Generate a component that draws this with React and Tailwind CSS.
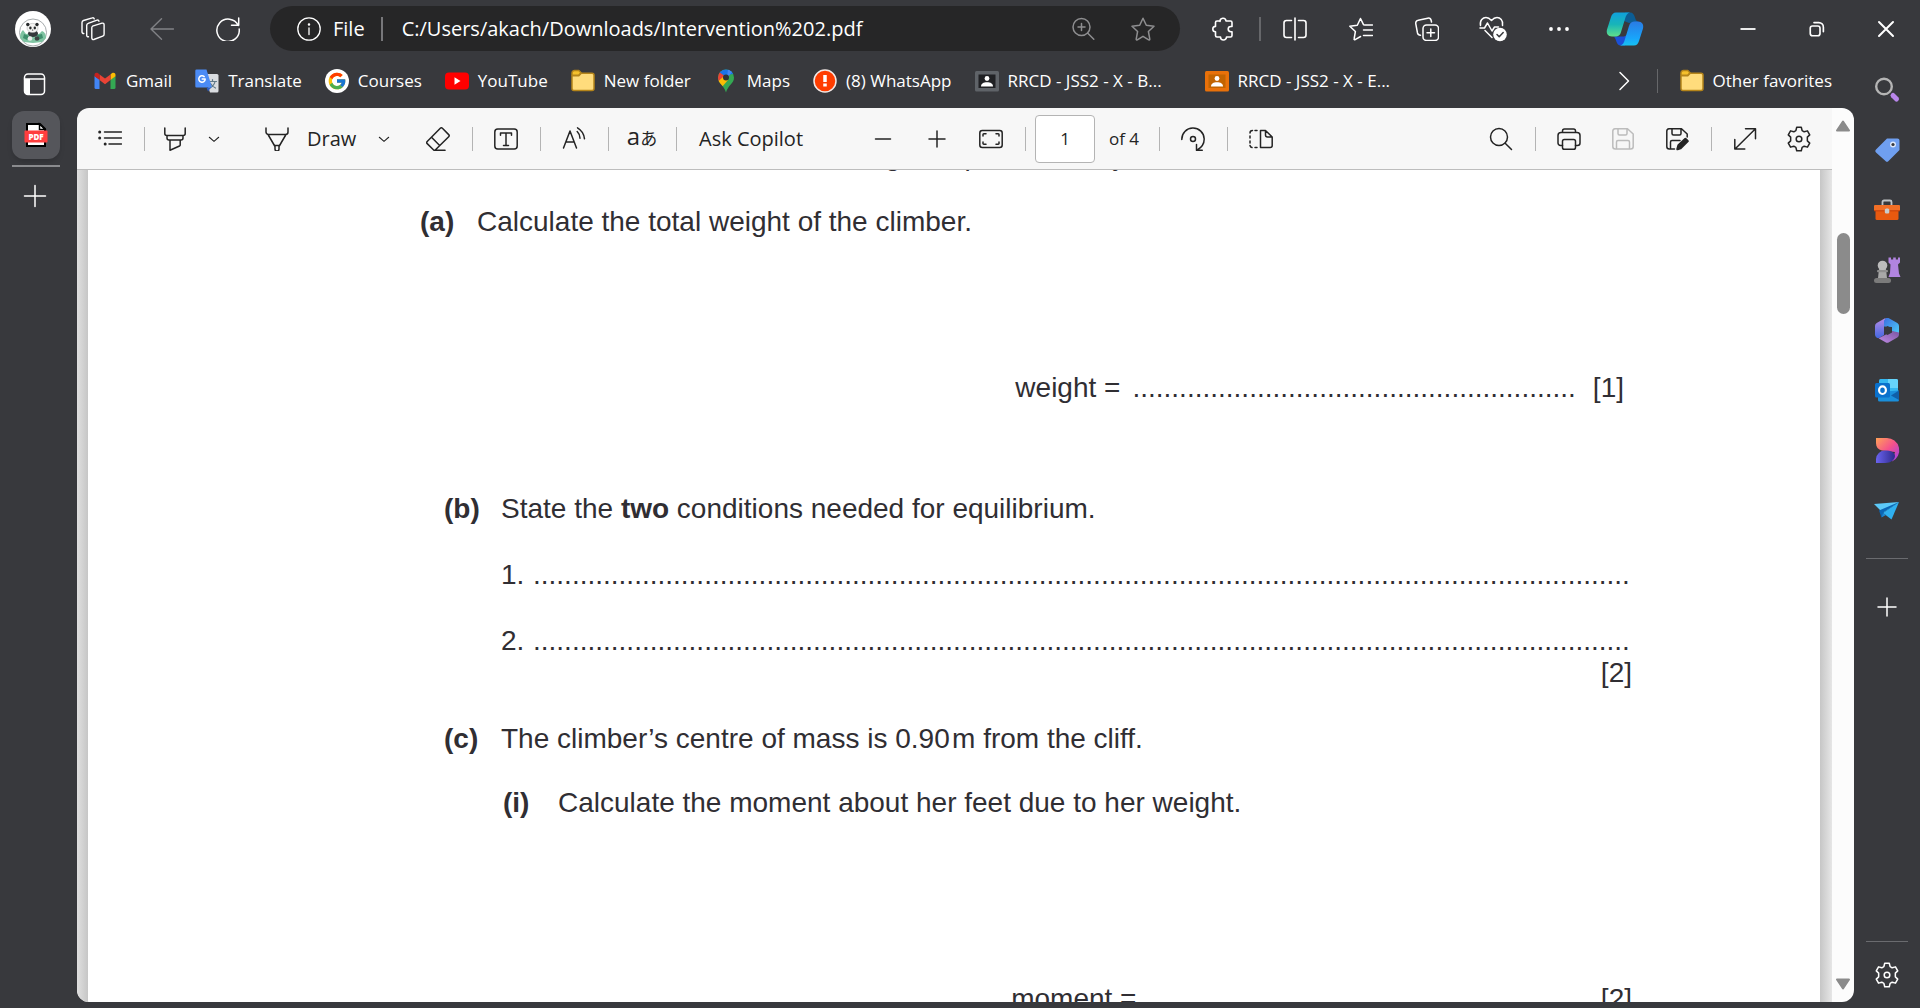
import React from 'react';
import { FcGoogle } from 'react-icons/fc';

const Icon = ({ size = 24, width = 1.5, children }) => (
    <svg width={size} height={size} viewBox="0 0 24 24" fill="none" stroke="currentColor" strokeWidth={width} strokeLinecap="round" strokeLinejoin="round" aria-hidden="true">
        {children}
    </svg>
);

const GearIcon = () => (
    <Icon size={26} width={1.4}>
        <path d="M9.9 1.2h4.2l.8 3.1 1.9 1.1 3-.9 2.1 3.7-2.2 2.1v3.4l2.2 2.1-2.1 3.7-3-.9-1.9 1.1-.8 3.1H9.9l-.8-3.1-1.9-1.1-3 .9-2.1-3.7 2.2-2.1v-3.4L2.1 8.2l2.1-3.7 3 .9 1.9-1.1z" />
        <circle cx="12" cy="12" r="2.6" />
    </Icon>
);

const FolderIcon = () => (
    <Icon>
        <path d="M1 4a2.5 2.5 0 0 1 2.5-2.5h4.3L10 3.8 7.8 6.2H1z" fill="#f5c02c" stroke="#b5851a" />
        <path d="M1 6.8h6.8l2.4-2.6H21a2 2 0 0 1 2 2V19.500a2 2 0 0 1-2 2H3a2 2 0 0 1-2-2z" fill="#ffdc7c" stroke="#b5851a" />
    </Icon>
);

const GmailIcon = () => (
    <Icon>
        <g stroke="none">
            <path d="M1.5 7v11.500A1.500 1.500 0 0 0 3 20h3.500V10.500z" fill="#4285f4" />
            <path d="M22.500 7v11.500A1.500 1.500 0 0 1 21 20h-3.500V10.500z" fill="#34a853" />
            <path d="M17.500 5.500v5.500l5-3.700V6c0-2.300-2-2.900-3.400-1.900z" fill="#fbbc04" />
            <path d="M6.500 11V5.500L12 9.600l5.500-4.100V11L12 15.200z" fill="#ea4335" />
            <path d="M1.500 6v1.300l5 3.700V5.500L4.900 4.100C3.500 3.100 1.500 3.700 1.500 6z" fill="#c5221f" />
        </g>
    </Icon>
);

const TranslateIcon = () => (
    <Icon>
        <path d="M9 5h13a1.500 1.500 0 0 1 1.500 1.500V22a1.500 1.500 0 0 1-1.500 1.500h-7z" fill="#d9dce0" stroke="none" />
        <path d="M14 12.500h7.500M17.500 10.500v2M20 12.500c-.5 3-2.500 5-5 6.500M15.500 14.500c1 2 3 3.500 5 4.500" stroke="#607988" strokeWidth="1.2" />
        <path d="M1.500.500h10L17 18.500H1.500A1.200 1.200 0 0 1 .3 17.300V1.700A1.200 1.200 0 0 1 1.500.500z" fill="#4b8bf5" stroke="none" />
        <path d="M11.500 18.500H16l-3 4z" fill="#2a5dc8" stroke="none" />
        <path d="M9.200 7.600a3.200 3.200 0 1 0 1 2.500H7.200" stroke="#fff" />
    </Icon>
);

const YouTubeIcon = () => (
    <Icon>
        <rect x="0" y="3.5" width="24" height="17" rx="4" fill="#f00" stroke="none" />
        <path d="M9.500 8.300v7.400l6-3.700z" fill="#fff" stroke="none" />
    </Icon>
);

const MapsIcon = () => (
    <Icon>
        <clipPath id="pin">
            <path d="M12 .5a8 8 0 0 0-8 8c0 6.300 6 7.500 8 15 2-7.500 8-8.700 8-15a8 8 0 0 0-8-8z" />
        </clipPath>
        <g clipPath="url(#pin)" stroke="none">
            <path d="M0 0h24v24H0z" fill="#34a853" />
            <path d="M4 14l9-10L4 2z" fill="#ea4335" />
            <path d="M5 3l5 3.500L19 5V0H6z" fill="#1a73e8" />
            <path d="M13 9l5.500-6.500L14 0z" fill="#4285f4" />
            <path d="M3.500 13L9 8l5 3-6 7z" fill="#fbbc04" />
        </g>
        <circle cx="12" cy="8.5" r="3" fill="#2d3338" stroke="none" />
    </Icon>
);

const AlertIcon = () => (
    <Icon>
        <circle cx="12" cy="12" r="11" fill="#ff3d00" stroke="#f3e9e6" />
        <path d="M12 6v7" stroke="#fff" strokeWidth="3.5" strokeLinecap="butt" />
        <path d="M12 14.500v3" stroke="#fff" strokeWidth="3.5" strokeLinecap="butt" />
    </Icon>
);

const ClassroomIcon = ({ frame, board }) => (
    <Icon>
        <rect x="0" y="2" width="24" height="20.5" rx="1.5" fill={frame} stroke="none" />
        <rect x="3.5" y="5.5" width="17" height="13.5" fill={board} stroke="none" />
        <circle cx="12" cy="9.5" r="2.4" fill="#fff" stroke="none" />
        <path d="M6 17.500c0-2.800 2.500-4.200 6-4.200s6 1.400 6 4.200z" fill="#fff" stroke="none" />
    </Icon>
);

const PandaAvatar = () => (
    <svg width="36" height="36" viewBox="0 0 36 36" aria-hidden="true">
        <circle cx="18" cy="18" r="18" fill="#fff" />
        <circle cx="18" cy="21.5" r="13.5" fill="none" stroke="#8f9598" strokeWidth="0.8" />
        <path d="M5 27c0-4 1-6 3-8l3 4 5-1 8 1 3-3c3 1 4 4 4 7l-4 4-9 1-9-1z" fill="#7fc4a2" />
        <path d="M9 23l5 2-2 4-4-2zM22 24l5-1 1 4-5 2z" fill="#3f8f6d" />
        <ellipse cx="18" cy="22.5" rx="5" ry="3.5" fill="#34383b" />
        <ellipse cx="17.5" cy="17" rx="5.5" ry="4.6" fill="#f4f4f2" stroke="#a9adad" strokeWidth="0.5" />
        <circle cx="12.8" cy="13.5" r="1.7" fill="#26292b" />
        <circle cx="22" cy="13.5" r="1.7" fill="#26292b" />
        <ellipse cx="15.4" cy="17" rx="1.2" ry="1.4" fill="#26292b" />
        <ellipse cx="19.8" cy="17" rx="1.2" ry="1.4" fill="#26292b" />
        <ellipse cx="17.6" cy="19" rx="0.8" ry="0.5" fill="#26292b" />
        <circle cx="15" cy="27.5" r="2.3" fill="#e9ece9" />
        <circle cx="22" cy="27.5" r="2.3" fill="#3c4443" />
    </svg>
);

const CopilotLogo = () => (
    <svg width="38" height="34" viewBox="0 0 38 34" aria-hidden="true">
        <defs>
            <linearGradient id="cpA" x1="0" y1="0" x2="0" y2="1">
                <stop offset="0" stopColor="#0fa0dc" />
                <stop offset="0.5" stopColor="#18b5b8" />
                <stop offset="1" stopColor="#60e08a" />
            </linearGradient>
            <linearGradient id="cpB" x1="0" y1="0" x2="0" y2="1">
                <stop offset="0" stopColor="#2a7be4" />
                <stop offset="0.7" stopColor="#18a5fb" />
                <stop offset="1" stopColor="#17c2f2" />
            </linearGradient>
        </defs>
        <path d="M19 .5h5c3 0 4 2 5 5 .7 2.500 1.500 4 4 4.500l-10 1-5-2z" fill="#0c5d94" />
        <path d="M19 33.500h-4c-3 0-4-2-5-5-.7-2-1-3.500-3-4h11l4-2z" fill="#1b50d8" />
        <path d="M10 .5h14c-3 .5-4 3-5 6.500l-4 13c-1 3.500-3 4.500-5.500 4.500H6c-4 0-6-3-5-7L5 5C6 2 7.500.5 10 .5z" fill="url(#cpA)" />
        <path d="M28 33.500H14c3-.5 4-3 5-6.500l4-13c1-3.500 3-4.500 5.500-4.500H32c4 0 6 3 5 7L33 29c-1 3-2.500 4.500-5 4.500z" fill="url(#cpB)" />
    </svg>
);

const PdfTabIcon = () => (
    <svg width="24" height="26" viewBox="0 0 24 26" aria-hidden="true">
        <path d="M3 2h13l5 5v17H3z" fill="#fff" stroke="#000" strokeWidth="2" />
        <path d="M15.500 2v5.500H21z" fill="#fff" stroke="#000" strokeWidth="1.5" />
        <rect x="0.5" y="8.500" width="23" height="12" rx="1" fill="#ff3e3e" />
        <text x="12" y="17.500" textAnchor="middle" fontSize="8" fontWeight="800" fill="#fff" fontFamily="Open Sans, sans-serif">PDF</text>
    </svg>
);

const favorites = [
    { label: 'Gmail', icon: <GmailIcon /> },
    { label: 'Translate', icon: <TranslateIcon /> },
    { label: 'Courses', icon: <span className="flex size-6 items-center justify-center rounded-full bg-white"><FcGoogle size={20} /></span> },
    { label: 'YouTube', icon: <YouTubeIcon /> },
    { label: 'New folder', icon: <FolderIcon /> },
    { label: 'Maps', icon: <MapsIcon /> },
    { label: '(8) WhatsApp', icon: <AlertIcon /> },
    { label: 'RRCD - JSS2 - X - B...', icon: <ClassroomIcon frame="#5f6368" board="#202124" />, wide: true },
    { label: 'RRCD - JSS2 - X - E...', icon: <ClassroomIcon frame="#e8710a" board="#c26401" />, wide: true },
];

const BarButton = ({ label, className = 'w-[66px]', children }) => (
    <button aria-label={label} className={`flex h-11 shrink-0 items-center justify-center ${className}`}>
        {children}
    </button>
);

const TitleBar = () => (
    <header className="flex h-[57px] shrink-0 items-center">
        <button aria-label="Profile" className="ml-[15px] shrink-0"><PandaAvatar /></button>
        <BarButton label="Workspaces" className="ml-[9px] w-[66px]">
            <Icon width={1.4}>
                <path d="M11.500 9.200l9.500-3a1.600 1.600 0 0 1 2.100 1.500v9.500a2 2 0 0 1-1.400 1.900l-8.900 3.400a1.500 1.500 0 0 1-2-1.400v-10a2 2 0 0 1 .7-1.900z" />
                <path d="M7.500 19.800a1.600 1.600 0 0 1-1.800-1.600V8.400a2.200 2.200 0 0 1 1.500-2L16 3.200a1.600 1.600 0 0 1 2 1" />
                <path d="M2.800 16.500A1.600 1.600 0 0 1 1 15V5.500a2.200 2.200 0 0 1 1.500-2L11.300.9a1.600 1.600 0 0 1 2 1" />
            </Icon>
        </BarButton>
        <BarButton label="Back" className="ml-[3px] w-[66px] text-[#818286]">
            <Icon width={1.4}><path d="M23.500 12H1M11.500 1.800L1 12l10.500 10.200" /></Icon>
        </BarButton>
        <BarButton label="Refresh">
            <Icon><path d="M22.200 8.500A11.200 11.200 0 1 0 23.200 12M22.700 1v7.300h-7.200" /></Icon>
        </BarButton>
        <div className="ml-[9px] flex h-[45px] min-w-0 flex-1 items-center rounded-full bg-[#262627] pl-[27px] pr-[25px] text-[20px]">
            <Icon width={1.3}><circle cx="12" cy="12" r="11.2" /><path d="M12 11v6.500" /><circle cx="12" cy="7.5" r=".6" fill="currentColor" /></Icon>
            <span className="ml-3">File</span>
            <span className="ml-4 mr-[19px] h-6 w-[2px] shrink-0 bg-[#77777a]" />
            <input aria-label="Address" readOnly value="C:/Users/akach/Downloads/Intervention%202.pdf" className="min-w-0 flex-1 bg-transparent outline-none" />
            <button aria-label="Zoom" className="mr-9 text-[#8e8e90]">
                <Icon><circle cx="10.5" cy="10" r="8.5" /><path d="M16.800 16.300l6 6M10.500 6.500v7M7 10h7" /></Icon>
            </button>
            <button aria-label="Add to favorites" className="text-[#8e8e90]">
                <Icon><path d="M12 1.200l3.300 7 7.700 1-5.600 5.300 1.400 7.600a.8.800 0 0 1-1.100.8L12 19.300l-5.700 3.600a.8.800 0 0 1-1.100-.8l1.400-7.600L1 9.200l7.700-1z" /></Icon>
            </button>
        </div>
        <BarButton label="Extensions" className="ml-[10px] w-[66px]">
            <Icon width={1.6}><path d="M9 4.500a3 3 0 0 1 6-.5h4.500a1.500 1.500 0 0 1 1.500 1.500V9.500h-1.200a2.600 2.600 0 0 0 0 5.200H21v3.800a1.500 1.500 0 0 1-1.500 1.500h-4a3 3 0 0 1-6 0H6A1.500 1.500 0 0 1 4.500 18.500v-3.700a2.700 2.700 0 0 1 0-5.400V5.500A1.500 1.500 0 0 1 6 4h3z" /></Icon>
        </BarButton>
        <span className="ml-[3px] mr-px h-6 w-[2px] bg-[#66676a]" />
        <BarButton label="Split screen">
            <Icon width={1.6}><path d="M12 1v22M8.500 3.500H3.500A2.500 2.500 0 0 0 1 6v12a2.500 2.500 0 0 0 2.500 2.500h5M15.500 3.500h5A2.500 2.500 0 0 1 23 6v12a2.500 2.500 0 0 1-2.500 2.500h-5" /></Icon>
        </BarButton>
        <BarButton label="Favorites">
            <Icon><path d="M23.500 8H16l-1.500-.3-3-6.200-3.200 6.700-7.500 1 5.600 5.300-1.300 7.500a.6.600 0 0 0 1 .6l5.500-3.100M14.500 13h9M14.500 18.500h9" /></Icon>
        </BarButton>
        <BarButton label="Collections">
            <Icon><rect x="8" y="8" width="15.5" height="15.5" rx="3.5" /><path d="M15.800 12v7.500M12 15.800h7.500M5.500 18.200a3 3 0 0 1-3-2.200L.8 6.800A3 3 0 0 1 3.200 3.200l9.500-2a3 3 0 0 1 3.500 2.300l.3 1.500" /></Icon>
        </BarButton>
        <BarButton label="Browser essentials">
            <svg width="28" height="26" viewBox="0 0 28 26" fill="none" stroke="currentColor" strokeWidth="1.5" strokeLinecap="round" strokeLinejoin="round" aria-hidden="true">
                <path d="M1.500 9.500C.5 4 4 1.500 7 1.500c2.500 0 4 1.300 5.500 3 1.500-1.700 3-3 5.500-3 3 0 6.500 2.500 5.500 8M1 12h4.500l3-5 4.500 8 2.500-4h4M6 14.500l7 7" />
                <circle cx="21" cy="18.5" r="6.8" fill="#fff" stroke="none" />
                <path d="M18 18.500l2.200 2.200 4-4.200" stroke="#38393d" />
            </svg>
        </BarButton>
        <BarButton label="Settings and more">
            <Icon><g fill="currentColor" stroke="none"><circle cx="4" cy="12" r="1.9" /><circle cx="12" cy="12" r="1.9" /><circle cx="20" cy="12" r="1.9" /></g></Icon>
        </BarButton>
        <BarButton label="Copilot" className="mr-[55px] w-[66px]"><CopilotLogo /></BarButton>
        <BarButton label="Minimize" className="w-[69px]">
            <Icon width={1.8}><path d="M4.500 12h15" strokeLinecap="butt" /></Icon>
        </BarButton>
        <BarButton label="Restore" className="w-[69px]">
            <Icon size={18} width={2.2}><rect x="3" y="8" width="13" height="13" rx="3" /><path d="M8 3.500h6.500a6 6 0 0 1 6 6v6" /></Icon>
        </BarButton>
        <BarButton label="Close" className="w-[69px]">
            <Icon width={2}><path d="M5 5l14 14M19 5L5 19" /></Icon>
        </BarButton>
    </header>
);

const FavoritesBar = () => (
    <nav className="flex h-[51px] shrink-0 items-center pb-[3px] pl-4 pr-[22px] text-[17px]">
        <div className="flex min-w-0 flex-1 gap-[23px] overflow-hidden">
            {favorites.map((item) => (
                <a key={item.label} href="#" className="flex shrink-0 items-center gap-[9px] whitespace-nowrap">
                    {item.icon}
                    <span className={item.wide ? 'min-w-[174px]' : ''}>{item.label}</span>
                </a>
            ))}
        </div>
        <button aria-label="More favorites" className="mr-[21px]">
            <Icon><path d="M8 3.500l8.500 8.500L8 20.500" /></Icon>
        </button>
        <span className="mr-[22px] h-6 w-px bg-[#66676a]" />
        <a href="#" className="flex items-center gap-[9px] whitespace-nowrap"><FolderIcon />Other favorites</a>
    </nav>
);

const TabRail = () => (
    <aside className="flex w-[77px] shrink-0 flex-col pl-3">
        <button aria-label="Tab actions" className="ml-[10px] mt-[15px] size-6">
            <Icon width={1.5}>
                <rect x="2.5" y="2" width="20" height="20.5" rx="3.5" />
                <path d="M2.500 7H22.500" />
                <path d="M2.500 7H8v15.500H6a3.500 3.500 0 0 1-3.500-3.500z" fill="currentColor" stroke="none" />
            </Icon>
        </button>
        <button aria-label="Intervention 2.pdf" className="mt-[15px] flex size-12 items-center justify-center rounded-xl bg-[#55565b] shadow-md">
            <PdfTabIcon />
        </button>
        <span className="mt-[6px] h-[2px] w-12 bg-[#8a8b8e]" />
        <button aria-label="New tab" className="ml-[11px] mt-[17px] size-6">
            <Icon><path d="M12 1.500v21M1.500 12h21" /></Icon>
        </button>
    </aside>
);

const Tool = ({ label, className = 'w-[54px]', children }) => (
    <button aria-label={label} className={`flex h-12 shrink-0 items-center justify-center ${className}`}>
        {children}
    </button>
);

const Divider = () => (
    <span className="flex w-[14px] shrink-0 justify-center"><span className="h-6 w-px bg-[#b4b4b4]" /></span>
);

const Chevron = () => (
    <Icon size={14} width={1.8}><path d="M4 9l8 7 8-7" /></Icon>
);

const PdfToolbar = () => (
    <div className="flex h-[62px] shrink-0 items-center border-b border-[#bdbdbd] bg-[#f7f7f7] px-[6px] text-[20px] text-[#242424]">
        <Tool label="Table of contents">
            <Icon><path d="M6.500 5h17M6.500 11h17M11 17h12.500" /><g fill="currentColor" stroke="none"><circle cx="1.7" cy="5" r="1.5" /><circle cx="1.7" cy="11" r="1.5" /><circle cx="7.2" cy="17" r="1.5" /></g></Icon>
        </Tool>
        <Divider />
        <Tool label="Highlight" className="w-12">
            <Icon><path d="M1.800 1v5.500a2 2 0 0 0 2 2h16.400a2 2 0 0 0 2-2V1M4 8.500v2.500a2 2 0 0 0 2 2h12a2 2 0 0 0 2-2V8.500M7 13v10.200l9.500-4.200a1.200 1.200 0 0 0 .7-1.100V13" /></Icon>
        </Tool>
        <Tool label="Highlight colors" className="mr-6 w-[30px]"><Chevron /></Tool>
        <Tool label="Pen" className="w-12">
            <Icon><path d="M1 1v4a2.500 2.500 0 0 0 2.500 2.500h17A2.500 2.500 0 0 0 23 5V1M3 7.500l7 12v2.500a2 2 0 0 0 4 0v-2.500l7-12M10 18.500h4" /></Icon>
        </Tool>
        <button className="w-[68px] pl-[6px] text-left">Draw</button>
        <Tool label="Draw options" className="mr-3 w-[30px]"><Chevron /></Tool>
        <Tool label="Erase">
            <Icon><path d="M14.300 1.300a1.500 1.500 0 0 1 2.100 0l6.300 6.300a1.500 1.500 0 0 1 0 2.100L9.500 22.800a1.500 1.500 0 0 1-2.100 0L1.200 16.600a1.500 1.500 0 0 1 0-2.100zM5.500 10.300l8.200 8.200M8.500 23.300H19" /></Icon>
        </Tool>
        <Divider />
        <Tool label="Add text">
            <Icon><rect x="0.8" y="2" width="22.4" height="20" rx="3" /><path d="M6.500 8.200V6h11v2.200M12 6v12.500M9.500 18.500h5" /></Icon>
        </Tool>
        <Divider />
        <Tool label="Read aloud">
            <Icon><path d="M1.500 21L8 4l6.500 17M4 15h8M15.200 4.500a9.500 9.500 0 0 1 2.800 6.800M15.500.8a14.500 14.500 0 0 1 7 11" /></Icon>
        </Tool>
        <Divider />
        <button aria-label="Translate" className="w-[54px] shrink-0 pb-1 text-center text-[24px] leading-6">a<span className="font-['Noto_Sans_CJK_JP',sans-serif] text-[17px]">あ</span></button>
        <Divider />
        <button className="w-[173px] shrink-0 pl-4 text-left">Ask Copilot</button>
        <Tool label="Zoom out"><Icon width={1.5}><path d="M4.500 12h15" /></Icon></Tool>
        <Tool label="Zoom in"><Icon><path d="M4 12h16M12 4v16" /></Icon></Tool>
        <Tool label="Fit to width">
            <Icon><rect x="0.8" y="3.5" width="22.4" height="17" rx="2.5" /><path d="M4 9V7.500A.8.800 0 0 1 4.800 6.700H7M17 6.700h2.200a.8.800 0 0 1 .8.800V9M20 15v1.500a.8.800 0 0 1-.8.800H17M7 17.300H4.800a.8.800 0 0 1-.8-.8V15" /></Icon>
        </Tool>
        <Divider />
        <input aria-label="Page number" defaultValue="1" className="ml-[3px] h-12 w-[60px] shrink-0 rounded-[4px] border border-[#b4b4b4] bg-white text-center text-[17px] outline-none" />
        <span className="w-[57px] shrink-0 whitespace-nowrap pl-[14px] text-[17px]">of 4</span>
        <Divider />
        <Tool label="Rotate">
            <Icon><path d="M.8 12.500A11.200 11.200 0 0 1 23.200 12c0 4.500-2.500 8.500-7 11M15.500 17.500v5.800h5.700" /><circle cx="12" cy="12" r="2.5" /></Icon>
        </Tool>
        <Divider />
        <Tool label="Page view">
            <Icon><path d="M11.500 3.500h5l6.700 6.500v8.500a2 2 0 0 1-2 2h-9.700zM16.500 3.500v4.500a2 2 0 0 0 2 2h4.700" /><path d="M8 3.500H6M3.500 3.500A2.500 2.500 0 0 0 1 6M1 9v2M1 14v2M1 18.500a2.500 2.500 0 0 0 2 2M6 20.500h2" /></Icon>
        </Tool>
        <div className="flex-1" />
        <Tool label="Find">
            <Icon><circle cx="10" cy="10" r="8.5" /><path d="M16.200 16.200l6.300 6.300" /></Icon>
        </Tool>
        <Divider />
        <Tool label="Print">
            <Icon><path d="M5.500 18.500H3.500a2.500 2.500 0 0 1-2.500-2.500V8.500a3 3 0 0 1 3-3h16a3 3 0 0 1 3 3V16a2.500 2.500 0 0 1-2.500 2.500h-2M5.500 5.500v-1.500a2 2 0 0 1 2-2h9a2 2 0 0 1 2 2v1.500" /><rect x="5.5" y="12.5" width="13" height="9.8" rx="1.8" /></Icon>
        </Tool>
        <Tool label="Save" className="w-[54px] text-[#bcbcbc]">
            <Icon><path d="M4 1.800h12.500L22.200 7v12.500a2.500 2.500 0 0 1-2.500 2.500H4.300a2.500 2.500 0 0 1-2.500-2.500V4.300A2.500 2.500 0 0 1 4 1.800zM7 1.800v4.700a1.500 1.500 0 0 0 1.500 1.500h6A1.500 1.500 0 0 0 16 6.500V1.800M5.500 22v-7A1.500 1.500 0 0 1 7 13.500h10a1.500 1.500 0 0 1 1.500 1.500v7" /></Icon>
        </Tool>
        <Tool label="Save as">
            <Icon><path d="M9.500 22H4.300a2.500 2.500 0 0 1-2.500-2.500V4.300A2.500 2.500 0 0 1 4 1.800h12.500L22.200 7v3M7 1.800v4.700a1.500 1.500 0 0 0 1.500 1.500h6A1.500 1.500 0 0 0 16 6.500V1.800M5.500 22v-7A1.500 1.500 0 0 1 7 13.500h8" /><path d="M12.500 22l1-3.500 7-6.500 2 2.200-7 6.800z" fill="currentColor" strokeWidth="2.5" /></Icon>
        </Tool>
        <Divider />
        <Tool label="Full screen">
            <Icon><path d="M2 22L22.500 1.800M12.500 1.800h10v10M1.800 12.500V22h10" /></Icon>
        </Tool>
        <Tool label="Settings"><GearIcon /></Tool>
    </div>
);

const DocumentPage = () => (
    <main className="flex min-h-0 flex-1 overflow-hidden bg-white font-['Liberation_Sans',Arial,sans-serif] text-[28px] leading-8 text-[#302e33]">
        <div className="w-[11px] shrink-0 bg-linear-to-r from-[#e0e0e0] to-[#c6c6c6]" />
        <div className="min-w-0 flex-1 overflow-hidden whitespace-nowrap">
            {/* tail of the line that is scrolled off the top */}
            <p aria-hidden="true" className="-mt-[30px] flex gap-16 pl-[797px]"><span>g</span><span>p</span><span className="pl-[68px]">y</span></p>
            <div className="mt-[34px] flex pl-[332px]"><b className="w-[57px]">(a)</b>Calculate the total weight of the climber.</div>
            <div className="mt-[134px] flex justify-end pr-[196px]">
                <span>weight =</span>
                <span className="ml-3">{'.'.repeat(57)}</span>
                <span className="ml-[17px]">[1]</span>
            </div>
            <div className="mt-[89px] flex pl-[356px]"><b className="w-[57px]">(b)</b><span>State the <b>two</b> conditions needed for equilibrium.</span></div>
            <div className="mt-[34px] flex pl-[413px]"><span className="w-8">1.</span>{'.'.repeat(141)}</div>
            <div className="mt-[34px] flex pl-[413px]"><span className="w-8">2.</span>{'.'.repeat(141)}</div>
            <p className="pr-[188px] text-right">[2]</p>
            <div className="mt-[34px] flex pl-[356px]"><b className="w-[57px]">(c)</b>The climber’s centre of mass is 0.90&#8202;m from the cliff.</div>
            <div className="mt-8 flex pl-[415px]"><b className="w-[55px]">(i)</b>Calculate the moment about her feet due to her weight.</div>
            <div className="mt-[164px] flex justify-end pr-[188px]">
                <span>moment =</span>
                <span className="ml-1">{'.'.repeat(57)}</span>
                <span className="ml-[17px]">[2]</span>
            </div>
        </div>
        <div className="w-3 shrink-0 bg-linear-to-r from-[#c6c6c6] to-[#e6e6e6]" />
    </main>
);

const ScrollBar = () => (
    <div className="flex w-[22px] shrink-0 flex-col items-center bg-[#fcfcfc] py-3 text-[#8b8b8b]">
        <svg width="16" height="12" viewBox="0 0 16 12" aria-hidden="true"><path d="M8 1.500l6 9H2z" fill="currentColor" stroke="currentColor" strokeWidth="2" strokeLinejoin="round" /></svg>
        <div className="mt-[101px] h-[81px] w-[13px] rounded-full bg-[#8b8b8b]" />
        <div className="flex-1" />
        <svg width="16" height="12" viewBox="0 0 16 12" aria-hidden="true"><path d="M8 10.500l6-9H2z" fill="currentColor" stroke="currentColor" strokeWidth="2" strokeLinejoin="round" /></svg>
    </div>
);

const sidebarApps = [
    { label: 'Search', art: (
        <>
            <circle cx="9" cy="8.5" r="7.8" fill="none" stroke="#b5b5b5" strokeWidth="2.4" />
            <path d="M18 17.500l3.500 3.500" stroke="#b886ea" strokeWidth="5" strokeLinecap="round" />
        </>
    ) },
    { label: 'Shopping', art: (
        <>
            <path d="M12 .5h10.500a2 2 0 0 1 2 2v9.500L13.500 23a2 2 0 0 1-3 0L1 14.500a2 2 0 0 1 0-3z" fill="#6f9ff0" />
            <circle cx="18" cy="6.5" r="3" fill="#dde8fb" /><circle cx="18" cy="6.5" r="1.6" fill="#38393d" />
        </>
    ) },
    { label: 'Tools', art: (
        <>
            <path d="M7.500 7.500V4a1.500 1.500 0 0 1 1.500-1.500h6A1.500 1.500 0 0 1 16.500 4v3.500" fill="none" stroke="#bfc3c6" strokeWidth="1.8" />
            <rect x="0.5" y="10.5" width="23" height="11.5" rx="1.5" fill="#e8590f" />
            <rect x="-1" y="7" width="26" height="6" rx="1" fill="#f26f26" />
            <path d="M-1 12.800h26" stroke="#c43e09" />
            <rect x="9.800" y="10.500" width="4.500" height="5" rx="1.5" fill="#c8ccce" />
        </>
    ) },
    { label: 'Games', art: (
        <>
            <path d="M13.500-.5h2.500v2h2.200v-2h2.600v2H23v-2h2v5l-2 2 1 9 1.500 3.500h-12L15 15l.5-8.500-2-2z" fill="#b184e0" />
            <path d="M4 11h7l1 9H3z" fill="#a8a8a8" /><circle cx="7.5" cy="7.5" r="4.8" fill="#bcbcbc" />
            <rect x="2" y="12" width="11" height="2.2" rx="1" fill="#8f8f8f" />
            <rect x="-1" y="20" width="17" height="5" rx="2.5" fill="#7b7b7b" />
        </>
    ) },
    { label: 'Microsoft 365', art: (
        <>
            <defs>
                <linearGradient id="msA" x1="0" y1="0" x2="0" y2="1"><stop offset="0" stopColor="#b58be6" /><stop offset="1" stopColor="#4468e0" /></linearGradient>
                <linearGradient id="msB" x1="0" y1="0" x2="1" y2="1"><stop offset="0" stopColor="#3a6fe0" /><stop offset="1" stopColor="#4fd0f7" /></linearGradient>
                <linearGradient id="msC" x1="0" y1="1" x2="1" y2="0"><stop offset="0" stopColor="#c08be6" /><stop offset="1" stopColor="#7a55a0" /></linearGradient>
            </defs>
            <path d="M10 .3L1.700 5A3.500 3.500 0 0 0 0 8v8.500A3.500 3.500 0 0 0 4 20l5-3V8.500c0-2 1-2.500 6-5z" fill="url(#msA)" />
            <path d="M9 2.500L11 0h2.500l8.800 5A3.500 3.500 0 0 1 24 8v8.500L17 13V9L9 8.500z" fill="url(#msB)" />
            <path d="M24 14.500v2a3.500 3.500 0 0 1-1.700 3L14 24.300a3.500 3.500 0 0 1-3.500 0L3.500 20.200 10 17l7-4z" fill="url(#msC)" />
            <path d="M12.500 8l4.500 2.500v4L12.500 17 9 15v-4.500z" fill="#38393d" />
        </>
    ) },
    { label: 'Outlook', art: (
        <>
            <rect x="4" y="1" width="19" height="14" rx="1.5" fill="#35b8f1" />
            <path d="M13 1h8.500A1.500 1.500 0 0 1 23 2.500V10H13z" fill="#67d5fb" />
            <path d="M3 14l21-1.500V22a1.500 1.500 0 0 1-1.500 1.500h-18A1.500 1.500 0 0 1 3 22z" fill="#1a8fdb" />
            <path d="M24 12.500V22l-8-4.500z" fill="#0f5fa8" />
            <rect x="0" y="5" width="15" height="14.5" rx="1.5" fill="#0a71cc" />
            <ellipse cx="7.5" cy="12.2" rx="3.4" ry="3.8" fill="none" stroke="#fff" strokeWidth="2.2" />
        </>
    ) },
    { label: 'Designer', art: (
        <>
            <defs>
                <linearGradient id="dsA" x1="0" y1="0" x2="1" y2="1"><stop offset="0" stopColor="#ffa257" /><stop offset="0.5" stopColor="#f5518b" /><stop offset="1" stopColor="#9a3df0" /></linearGradient>
                <linearGradient id="dsB" x1="0" y1="0" x2="1" y2="0"><stop offset="0" stopColor="#6a63ef" /><stop offset="1" stopColor="#2f2a8c" /></linearGradient>
            </defs>
            <path d="M1 0h10.500A12.300 12.300 0 0 1 17 23.500L20 14 7 12.500C3 11.500 1 9 1 5z" fill="url(#dsA)" />
            <path d="M1 25v-4a9 9 0 0 1 9-8.500c6 0 10 2 10 5.500s-4 7-10 7z" fill="url(#dsB)" />
        </>
    ) },
    { label: 'Drop', art: (
        <>
            <path d="M-1 6L24 4 8 15z" fill="#5cc9f8" />
            <path d="M24 4L16.500 21.500 8 15z" fill="#2fb0f0" />
            <path d="M24 4L4 12.500l2.500 7L9 14z" fill="#0a66b5" />
            <path d="M8 15l-1.500 4.500 4.500-2.500z" fill="#1a86d4" />
        </>
    ) },
];

const Sidebar = () => (
    <aside className="flex w-[66px] shrink-0 flex-col items-center pt-[3px]">
        {sidebarApps.map((app) => (
            <button key={app.label} aria-label={app.label} className="flex h-[60px] w-full items-center justify-center">
                <svg width="24" height="24" viewBox="0 0 24 24" className="overflow-visible" aria-hidden="true">{app.art}</svg>
            </button>
        ))}
        <span className="mt-[18px] h-px w-[42px] bg-[#6a6b6f]" />
        <button aria-label="Customize" className="mt-9"><Icon><path d="M12 3v18M3 12h18" /></Icon></button>
        <div className="flex-1" />
        <span className="h-px w-[42px] bg-[#6a6b6f]" />
        <button aria-label="Sidebar settings" className="mb-5 mt-5"><GearIcon /></button>
    </aside>
);

const App = () => {
    return (
        <div className="flex h-screen min-h-0 flex-col overflow-hidden bg-[#38393d] font-['Open_Sans','Noto_Sans',sans-serif] text-white">
            <TitleBar />
            <div className="flex min-h-0 flex-1">
                <TabRail />
                <div className="flex min-w-0 flex-1 flex-col pb-[6px]">
                    <FavoritesBar />
                    <div className="flex min-h-0 flex-1 overflow-hidden rounded-xl">
                        <div className="flex min-w-0 flex-1 flex-col">
                            <PdfToolbar />
                            <DocumentPage />
                        </div>
                        <ScrollBar />
                    </div>
                </div>
                <Sidebar />
            </div>
        </div>
    );
};

export default App;
